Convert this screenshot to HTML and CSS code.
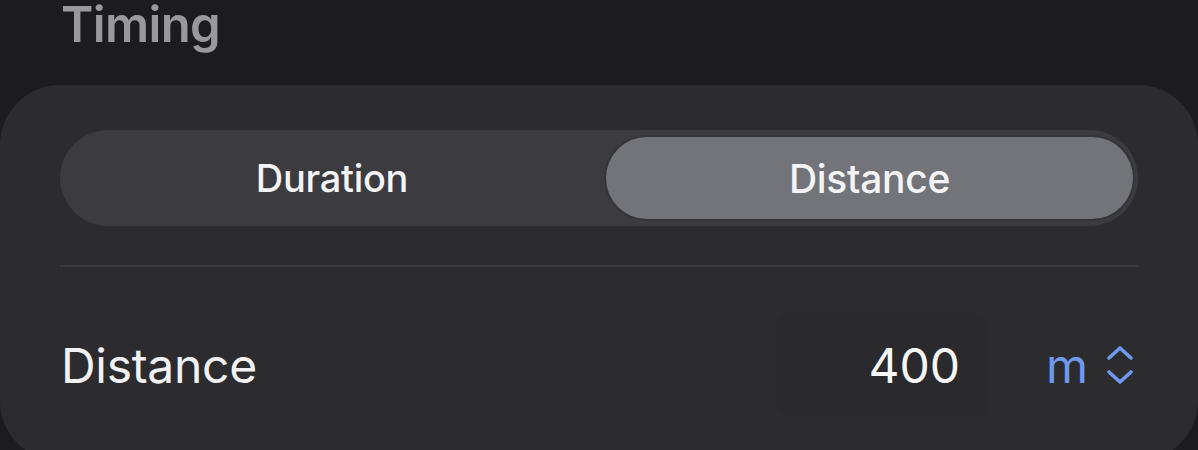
FILE: index.html
```html
<!DOCTYPE html>
<html lang="en">
<head>
<meta charset="utf-8">
<title>Timing</title>
<link rel="stylesheet" href="styles.css">
</head>
<body>
  <h2 class="section-title">Timing</h2>
  <section class="card">
    <div class="segmented">
      <button class="segment">Duration</button>
      <button class="segment selected">Distance</button>
    </div>
    <div class="separator"></div>
    <div class="row">
      <span class="row-label">Distance</span>
      <span class="value-box">400</span>
      <span class="unit">m</span>
      <svg class="chevrons" width="28" height="40" viewBox="0 0 28 40" aria-hidden="true">
        <path d="M3 13 L14 3 L25 13" fill="none" stroke="#6f99ee" stroke-width="3.6" stroke-linecap="round" stroke-linejoin="round"/>
        <path d="M3 27 L14 37 L25 27" fill="none" stroke="#6f99ee" stroke-width="3.6" stroke-linecap="round" stroke-linejoin="round"/>
      </svg>
    </div>
  </section>
</body>
</html>
```

FILE: styles.css
```css
html, body {
  margin: 0;
  padding: 0;
  background: #1c1c1e;
  overflow: hidden;
}

body {
  width: 1198px;
  height: 450px;
  font-family: Inter, "Noto Sans", "Liberation Sans", sans-serif;
  color: #f2f2f4;
}

.section-title {
  margin: 0;
  padding-left: 61px;
  font-size: 49px;
  line-height: 50px;
  font-weight: 600;
  letter-spacing: -0.6px;
  color: #98989d;
}

.card {
  margin-top: 35px;
  height: 376px;
  background: #2c2c2e;
  border-radius: 60px;
  padding: 45px 60px 0 60px;
  box-sizing: border-box;
}

.segmented {
  display: grid;
  grid-template-columns: 1fr 1fr;
  height: 96px;
  padding: 7px 5px;
  box-sizing: border-box;
  background: #3b3b40;
  border-radius: 48px;
}

.segment {
  border: none;
  background: transparent;
  font-family: inherit;
  font-size: 38px;
  font-weight: 500;
  letter-spacing: -0.3px;
  color: #f4f4f6;
  border-radius: 41px;
  padding: 0;
}

.segment.selected {
  margin-left: 7px;
  font-size: 39px;
  background: #737479;
  box-shadow: 0 0 0 2px rgba(40, 40, 46, 0.35);
}

.separator {
  height: 2px;
  margin-top: 39px;
  background: #3a3a3d;
}

.row {
  display: flex;
  align-items: center;
  height: 200px;
  margin-top: -2px;
}

.row-label {
  flex: 1;
  padding-left: 1px;
  font-size: 48px;
  font-weight: 400;
  letter-spacing: -0.3px;
  color: #f2f2f4;
}

.value-box {
  width: 212px;
  height: 102px;
  box-sizing: border-box;
  padding-right: 28px;
  display: flex;
  align-items: center;
  justify-content: flex-end;
  background: #2a2a2d;
  border-radius: 12px;
  font-size: 48px;
  color: #f6f6f8;
}

.unit {
  margin-left: 58px;
  font-size: 48px;
  color: #6f99ee;
}

.chevrons {
  margin-left: 18px;
  margin-right: 4px;
}
```
